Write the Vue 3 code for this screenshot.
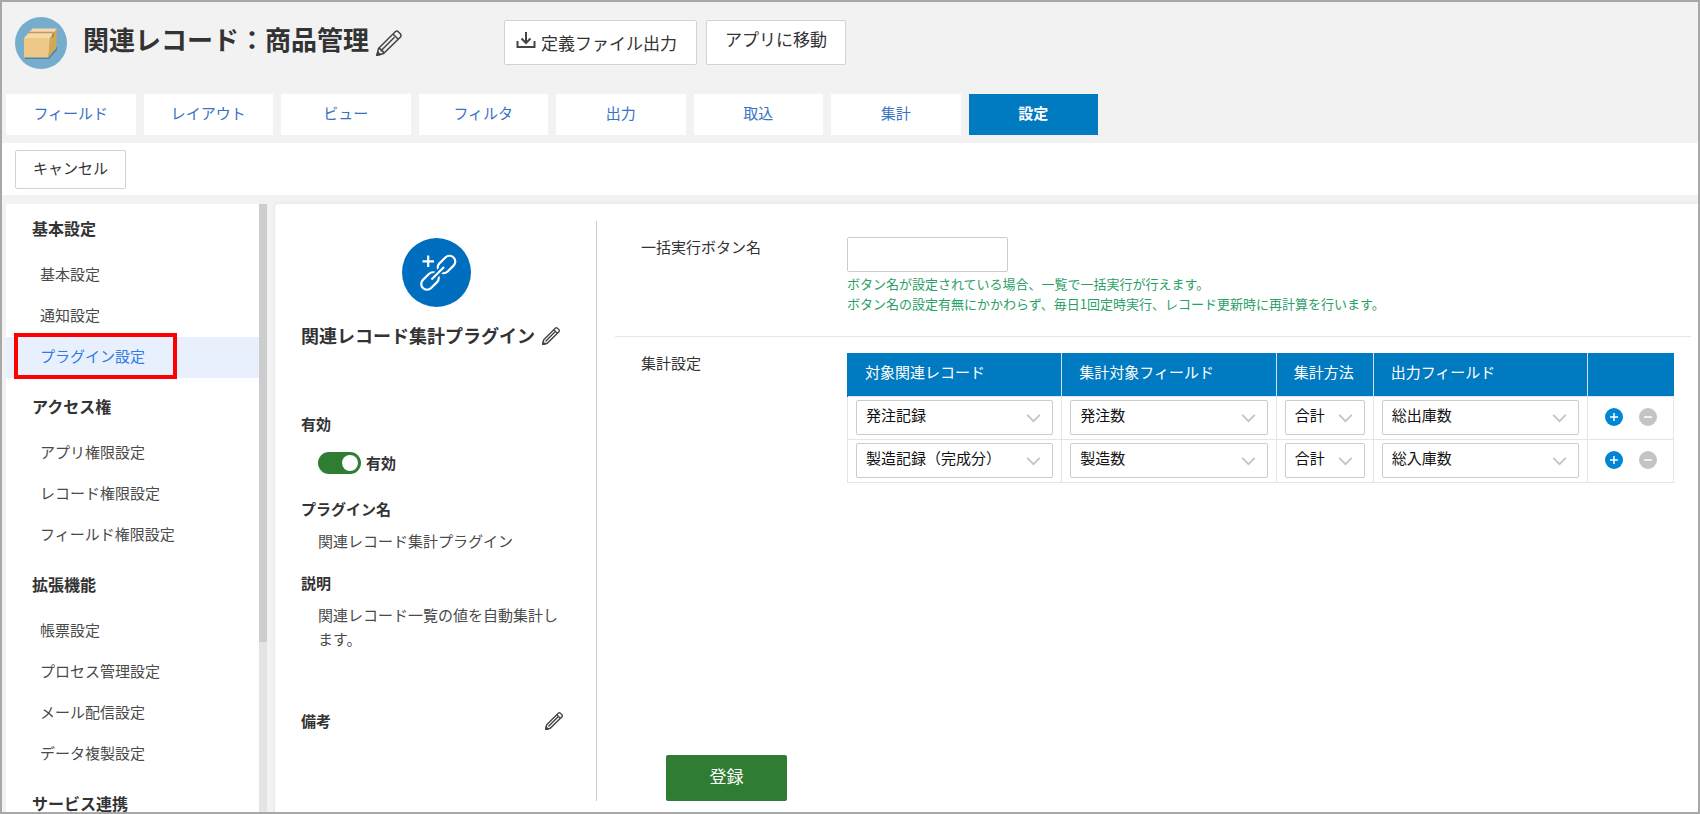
<template>
  <div class="page">
    <header class="header">
      <svg class="app-icon" viewBox="0 0 52 52" aria-hidden="true">
        <circle cx="26" cy="26" r="26" fill="#76adcd" />
        <path d="M10 42 L34 42 L42 33 L42 30 L9 38z" fill="#4f86a6" />
        <path d="M9 21H35L33.500 40.500H9z" fill="#edc887" />
        <path d="M17.500 11.500H42L35 21H9z" fill="#f5d9a6" />
        <path d="M35 21L42 11.500L41 31.500L33.500 40.500z" fill="#d4a752" />
        <path d="M13 15.500H38.500" stroke="#c29a66" stroke-width="1.500" />
        <path d="M38.500 16L37.500 20.500" stroke="#a87f4c" stroke-width="1.500" />
      </svg>
      <h1>関連レコード：商品管理</h1>
      <button class="icon-btn" type="button" aria-label="アプリ名を編集">
        <svg class="pencil large" viewBox="0 0 26 26">
          <path d="M2.500 18.500L19.500 1.500Q21 .5 22.500 2L24.500 4Q25.500 5.500 24.500 7L7.500 23.500L1 25.200z" />
          <path d="M17 4L22 9M5 20.800L18.500 7.200M2.500 18.500Q5.500 18.500 5.200 20.800Q7.700 21 7.500 23.500" />
          <path class="nib" d="M1 25.200L1.700 22L4.200 24.500z" />
        </svg>
      </button>
      <div class="header-actions">
        <button class="btn download" type="button">
          <svg viewBox="0 0 20 18" aria-hidden="true">
            <path d="M1.500 10V16H18.500V10M10 1V11M5.500 7.500L10 12L14.500 7.500" />
          </svg>
          <span>定義ファイル出力</span>
        </button>
        <button class="btn move" type="button">アプリに移動</button>
      </div>
    </header>

    <nav class="tabs">
      <a v-for="tab in tabs" :key="tab" href="#" :class="{ active: tab === activeTab }" @click.prevent="activeTab = tab">{{ tab }}</a>
    </nav>

    <div class="toolbar">
      <button class="btn cancel" type="button">キャンセル</button>
    </div>

    <div class="body">
      <aside class="sidebar">
        <nav class="menu">
          <section v-for="group in menu" :key="group.title">
            <h2>{{ group.title }}</h2>
            <a
              v-for="item in group.items"
              :key="item"
              href="#"
              :class="{ active: item === activeItem }"
              @click.prevent="activeItem = item"
            >{{ item }}</a>
          </section>
        </nav>
        <div class="scrollbar"><div class="thumb"></div></div>
      </aside>

      <main class="panel">
        <section class="plugin">
          <svg class="plugin-icon" viewBox="0 0 69 69" aria-hidden="true">
            <circle cx="34.500" cy="34.500" r="34.500" fill="#006ebf" />
            <g fill="none" stroke="#fff" stroke-width="2.200">
              <path d="M20.500 23.300H32M26.200 17.500V29" />
              <rect x="-10" y="-5.800" width="20" height="11.600" rx="5.800" transform="translate(44.500 26.500) rotate(-45)" />
              <rect x="-10" y="-5.800" width="20" height="11.600" rx="5.800" transform="translate(28 43) rotate(-45)" />
            </g>
            <path d="M32 39L40 31" stroke="#006ebf" stroke-width="6" />
            <path d="M29.500 41.500L42 29" stroke="#fff" stroke-width="2.200" />
          </svg>
          <div class="plugin-title">
            <h2>関連レコード集計プラグイン</h2>
            <button class="icon-btn" type="button" aria-label="プラグイン名を編集">
              <svg class="pencil" viewBox="0 0 26 26">
                <path d="M2.500 18.500L19.500 1.500Q21 .5 22.500 2L24.500 4Q25.500 5.500 24.500 7L7.500 23.500L1 25.200z" />
                <path d="M17 4L22 9M5 20.800L18.500 7.200" />
                <path class="nib" d="M1 25.200L1.700 22L4.200 24.500z" />
              </svg>
            </button>
          </div>

          <h3>有効</h3>
          <label class="switch">
            <input v-model="enabled" type="checkbox" />
            <span>有効</span>
          </label>

          <h3>プラグイン名</h3>
          <p>関連レコード集計プラグイン</p>

          <h3>説明</h3>
          <p class="description">関連レコード一覧の値を自動集計します。</p>

          <div class="note">
            <h3>備考</h3>
            <button class="icon-btn" type="button" aria-label="備考を編集">
              <svg class="pencil" viewBox="0 0 26 26">
                <path d="M2.500 18.500L19.500 1.500Q21 .5 22.500 2L24.500 4Q25.500 5.500 24.500 7L7.500 23.500L1 25.200z" />
                <path d="M17 4L22 9M5 20.800L18.500 7.200" />
                <path class="nib" d="M1 25.200L1.700 22L4.200 24.500z" />
              </svg>
            </button>
          </div>
        </section>

        <form class="settings" @submit.prevent>
          <div class="row">
            <label class="row-label" for="button-name">一括実行ボタン名</label>
            <div>
              <input id="button-name" v-model="buttonName" class="text-input" type="text" />
              <p class="help">
                ボタン名が設定されている場合、一覧で一括実行が行えます。<br />
                ボタン名の設定有無にかかわらず、毎日1回定時実行、レコード更新時に再計算を行います。
              </p>
            </div>
          </div>

          <div class="row summary">
            <div id="summary-label" class="row-label">集計設定</div>
            <table aria-labelledby="summary-label">
              <thead>
                <tr>
                  <th v-for="col in columns" :key="col.key" :class="'col-' + col.key">{{ col.label }}</th>
                  <th class="col-ops"></th>
                </tr>
              </thead>
              <tbody>
                <tr v-for="(row, index) in rows" :key="index">
                  <td v-for="col in columns" :key="col.key">
                    <div class="select">
                      <select v-model="row[col.key]" :aria-label="col.label">
                        <option v-for="opt in col.options" :key="opt">{{ opt }}</option>
                      </select>
                      <svg viewBox="0 0 16 10" aria-hidden="true"><path d="M1 1L8 8L15 1" /></svg>
                    </div>
                  </td>
                  <td>
                    <div class="row-ops">
                      <button class="round add" type="button" aria-label="行を追加" @click="addRow(index)">
                        <svg viewBox="0 0 18 18"><path d="M5 9H13M9 5V13" /></svg>
                      </button>
                      <button class="round remove" type="button" aria-label="行を削除">
                        <svg viewBox="0 0 18 18"><path d="M5 9H13" /></svg>
                      </button>
                    </div>
                  </td>
                </tr>
              </tbody>
            </table>
          </div>

          <button class="submit" type="submit">登録</button>
        </form>
      </main>
    </div>
  </div>
</template>

<script setup>
import { ref } from 'vue'

const tabs = ['フィールド', 'レイアウト', 'ビュー', 'フィルタ', '出力', '取込', '集計', '設定']
const activeTab = ref('設定')

const menu = [
  { title: '基本設定', items: ['基本設定', '通知設定', 'プラグイン設定'] },
  { title: 'アクセス権', items: ['アプリ権限設定', 'レコード権限設定', 'フィールド権限設定'] },
  { title: '拡張機能', items: ['帳票設定', 'プロセス管理設定', 'メール配信設定', 'データ複製設定'] },
  { title: 'サービス連携', items: [] }
]
const activeItem = ref('プラグイン設定')

const enabled = ref(true)
const buttonName = ref('')

const columns = [
  { key: 'source', label: '対象関連レコード', options: ['発注記録', '製造記録（完成分）'] },
  { key: 'field', label: '集計対象フィールド', options: ['発注数', '製造数'] },
  { key: 'method', label: '集計方法', options: ['合計'] },
  { key: 'output', label: '出力フィールド', options: ['総出庫数', '総入庫数'] }
]

const rows = ref([
  { source: '発注記録', field: '発注数', method: '合計', output: '総出庫数' },
  { source: '製造記録（完成分）', field: '製造数', method: '合計', output: '総入庫数' }
])

const addRow = (index) => {
  rows.value.splice(index + 1, 0, { ...rows.value[index] })
}
</script>

<style>
body {
  margin: 0;
}
</style>

<style scoped>
.page {
  box-sizing: border-box;
  display: flex;
  flex-direction: column;
  height: 100vh;
  overflow: hidden;
  border: 2px solid #a8a8a8;
  background: #f2f2f2;
  color: #333;
  font-family: 'Noto Sans CJK JP', sans-serif;
  font-size: 15px;
  line-height: 24px;
}

.page * {
  box-sizing: border-box;
}

h1,
h2,
h3,
p {
  margin: 0;
}

a {
  text-decoration: none;
}

button,
input,
select {
  font: inherit;
  color: inherit;
}

/* Header */
.header {
  display: flex;
  align-items: center;
  padding: 15px 13px 25px;
}

.app-icon {
  width: 52px;
  height: 52px;
}

.header h1 {
  padding: 0 7px 8px 16px;
  font-size: 26px;
  font-weight: 700;
  line-height: 36px;
}

.icon-btn {
  display: flex;
  padding: 0;
  border: 0;
  background: none;
}

.pencil {
  width: 18px;
  height: 18px;
  fill: none;
  stroke: #444;
  stroke-width: 2;
}

.pencil.large {
  width: 26px;
  height: 26px;
  stroke-width: 1.5;
}

.pencil .nib {
  fill: #333;
}

.header-actions {
  display: flex;
  gap: 9px;
  margin-left: 102px;
  padding-bottom: 2px;
}

.btn {
  border: 1px solid #d3d3d3;
  border-radius: 2px;
  background: #fff;
}

.header-actions .btn {
  height: 45px;
  font-size: 17px;
}

.download {
  display: flex;
  align-items: center;
  gap: 5px;
  padding: 2px 19px 0 11px;
}

.download svg {
  width: 20px;
  height: 18px;
  margin-bottom: 6px;
  fill: none;
  stroke: #444;
  stroke-width: 2;
}

.move {
  padding: 0 18px 6px;
}

/* Tabs */
.tabs {
  display: grid;
  grid-template-columns: repeat(8, 1fr);
  gap: 8px;
  max-width: 1100px;
  padding: 0 4px 8px;
}

.tabs a {
  padding: 7px 0 10px;
  background: #fff;
  color: #3a72c4;
  text-align: center;
}

.tabs a.active {
  background: #007ac0;
  color: #fff;
  font-weight: 700;
}

.toolbar {
  padding: 7px 13px 6px;
  background: #fff;
}

.cancel {
  display: block;
  height: 39px;
  padding: 0 17px 3px;
}

/* Body */
.body {
  display: flex;
  flex: 1;
  gap: 8px;
  min-height: 0;
  padding: 9px 0 0 4px;
}

.sidebar {
  display: flex;
  flex: none;
  width: 261px;
  background: #fff;
}

.menu {
  flex: 1;
  overflow: hidden;
}

.menu section + section {
  padding-top: 4px;
}

.menu h2 {
  padding: 12px 26px 15px;
  font-size: 16px;
  font-weight: 700;
}

.menu a {
  display: block;
  position: relative;
  padding: 7px 34px 10px;
  color: #4a4a4a;
}

.menu a.active {
  background: #e8f0fe;
  color: #2f7be0;
}

.menu a.active::after {
  content: '';
  position: absolute;
  box-sizing: border-box;
  top: -4px;
  left: 8px;
  width: 163px;
  height: 46px;
  border: 4px solid #f00;
}

.scrollbar {
  width: 8px;
  background: #e4e4e4;
}

.thumb {
  height: 72%;
  background: #cdcdcd;
}

.panel {
  display: flex;
  flex: 1;
  min-width: 0;
  padding: 17px 0 11px;
  border-radius: 3px 0 0 0;
  background: #fff;
  box-shadow: 0 0 3px #ddd;
}

/* Plugin information */
.plugin {
  flex: none;
  width: 322px;
  padding: 17px 33px 0 26px;
  border-right: 1px solid #ccc;
}

.plugin-icon {
  display: block;
  width: 69px;
  height: 69px;
  margin: 0 0 16px 101px;
}

.plugin-title {
  display: flex;
  align-items: center;
  gap: 7px;
  margin-bottom: 63px;
  white-space: nowrap;
}

.plugin-title h2 {
  padding-bottom: 2px;
  font-size: 18px;
  font-weight: 700;
}

.plugin h3 {
  font-size: 15px;
  font-weight: 700;
}

.switch {
  display: flex;
  align-items: center;
  gap: 5px;
  margin: 15px 0 22px 17px;
  font-weight: 700;
}

.switch input {
  width: 43px;
  height: 22px;
  margin: 0;
  padding: 3px;
  border-radius: 11px;
  background: #9e9e9e;
  appearance: none;
}

.switch input::before {
  content: '';
  display: block;
  width: 16px;
  height: 16px;
  border-radius: 50%;
  background: #fff;
}

.switch input:checked {
  background: #2e7d32;
}

.switch input:checked::before {
  margin-left: 21px;
}

.plugin p {
  margin: 8px 0 18px 17px;
  color: #4a4a4a;
}

.plugin .description {
  margin-right: -7px;
  margin-bottom: 58px;
}

.note {
  display: flex;
  align-items: center;
  justify-content: space-between;
}

/* Settings form */
.settings {
  display: flex;
  flex: 1;
  flex-direction: column;
  align-items: flex-start;
  min-width: 0;
  padding: 0 7px 0 18px;
}

.row {
  display: grid;
  grid-template-columns: 206px 1fr;
  width: 100%;
  padding: 16px 17px 22px 26px;
  border-bottom: 1px solid #e6e6e6;
}

.row.summary {
  border-bottom: 0;
}

.row-label {
  line-height: 20px;
}

.text-input {
  display: block;
  width: 161px;
  height: 35px;
  padding: 0 9px;
  border: 1px solid #ccc;
  border-radius: 2px;
}

.help {
  margin-top: 2px;
  color: #2aa067;
  font-size: 13px;
  line-height: 20px;
}

table {
  width: 100%;
  border-collapse: collapse;
  table-layout: fixed;
}

th {
  height: 43px;
  padding: 0 0 4px 17px;
  border-left: 1px solid #cfe2f0;
  background: #007ac0;
  color: #fff;
  font-weight: 400;
  text-align: left;
  white-space: nowrap;
}

th:first-child {
  border-left-color: #007ac0;
}

th.col-method {
  width: 97px;
}

th.col-ops {
  width: 86px;
}

td {
  height: 43px;
  padding: 3px 8px 4px;
  border: 1px solid #e3e6e9;
}

.select {
  position: relative;
}

.select select {
  display: block;
  width: 100%;
  height: 35px;
  padding: 0 9px 5px;
  border: 1px solid #ccc;
  border-radius: 2px;
  background: #fff;
  color: #111;
  appearance: none;
}

.select svg {
  position: absolute;
  top: 14px;
  right: 12px;
  width: 15px;
  height: 9px;
  fill: none;
  stroke: #c4c4c4;
  stroke-width: 2;
  pointer-events: none;
}

.row-ops {
  display: flex;
  justify-content: center;
  gap: 16px;
}

.round {
  width: 18px;
  height: 18px;
  padding: 0;
  border: 0;
  border-radius: 50%;
}

.round svg {
  display: block;
  fill: none;
  stroke: #fff;
  stroke-width: 1.5;
}

.add {
  background: #0086d4;
}

.remove {
  background: #c4c4c4;
}

.submit {
  width: 121px;
  height: 46px;
  margin: auto 0 0 51px;
  padding: 0 0 5px;
  border: 0;
  border-radius: 2px;
  background: #2e7d32;
  color: #fff;
  font-size: 17px;
}
</style>
